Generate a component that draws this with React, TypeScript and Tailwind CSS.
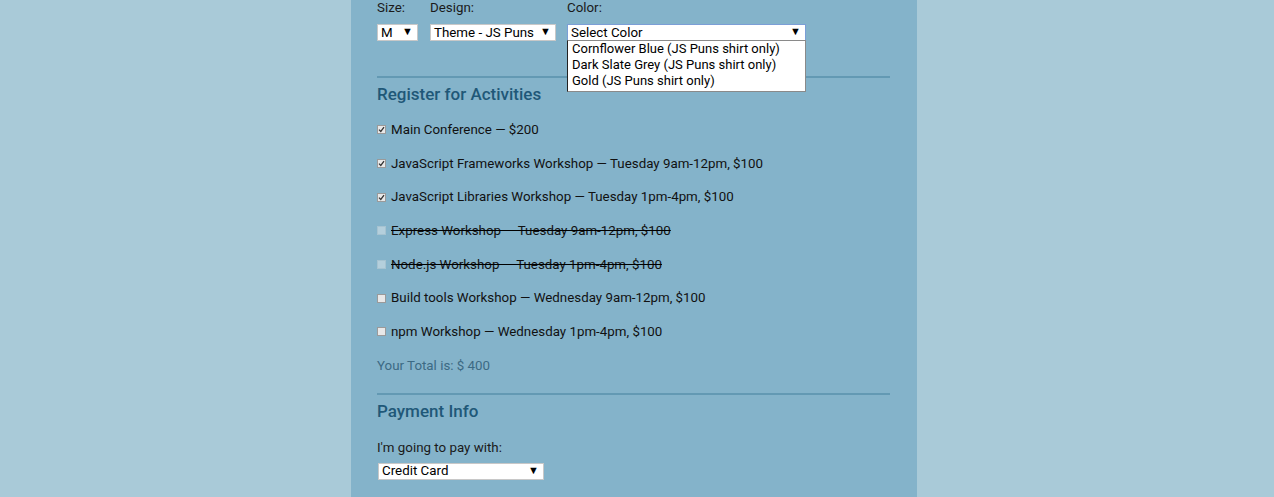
import React from 'react'

const activities = [
  { label: 'Main Conference — $200', checked: true },
  { label: 'JavaScript Frameworks Workshop — Tuesday 9am-12pm, $100', checked: true },
  { label: 'JavaScript Libraries Workshop — Tuesday 1pm-4pm, $100', checked: true },
  { label: 'Express Workshop — Tuesday 9am-12pm, $100', disabled: true },
  { label: 'Node.js Workshop — Tuesday 1pm-4pm, $100', disabled: true },
  { label: 'Build tools Workshop — Wednesday 9am-12pm, $100' },
  { label: 'npm Workshop — Wednesday 1pm-4pm, $100' },
]

function Box({ checked, disabled }: { checked?: boolean; disabled?: boolean }) {
  if (disabled) {
    return <span className="w-[9px] h-[9px] bg-[#b4cfdc] border border-[#a6c3d1] shrink-0" />
  }
  return (
    <span className="w-[9px] h-[9px] bg-[#e8e8e8] border border-[#9a9a9a] shrink-0 flex items-center justify-center">
      {checked && (
        <svg width="7" height="7" viewBox="0 0 7 7">
          <path d="M1 3.6 L2.8 5.4 L6 1.2" stroke="#333" strokeWidth="1.3" fill="none" />
        </svg>
      )}
    </span>
  )
}

function Select({ text, className }: { text: string; className: string }) {
  return (
    <div className={`h-[17px] bg-white flex items-center justify-between pl-[3px] pr-[4px] text-[13.33px] text-black ${className}`}>
      <span>{text}</span>
      <span className="text-[11px]">▼</span>
    </div>
  )
}

export default function App() {
  return (
    <div className="min-h-[497px] bg-[#a9cad8] font-['Roboto',sans-serif]">
      <div className="ml-[351px] w-[566px] min-h-[497px] bg-[#84b3ca] pl-[26px] pr-[27px] text-[13.33px] text-[#111]">
        {/* T-shirt */}
        <div className="flex">
          <div className="w-[53px]">
            <div className="h-4 leading-4 text-[#1a1a1a]">Size:</div>
            <Select text="M" className="mt-2 w-[41px] border border-[#c8c8c8]" />
          </div>
          <div className="w-[137px]">
            <div className="h-4 leading-4 text-[#1a1a1a]">Design:</div>
            <Select text="Theme - JS Puns" className="mt-2 w-[126px] border border-[#c8c8c8]" />
          </div>
          <div className="relative">
            <div className="h-4 leading-4 text-[#1a1a1a]">Color:</div>
            <Select text="Select Color" className="mt-2 w-[239px] border border-[#7b9ed6]" />
            <div className="absolute left-0 top-[40px] w-[239px] bg-white border border-[#8a8a8a] border-l-[#222] pl-[4px] pb-[2px] text-[13px] text-black">
              <div className="h-4 leading-4">Cornflower Blue (JS Puns shirt only)</div>
              <div className="h-4 leading-4">Dark Slate Grey (JS Puns shirt only)</div>
              <div className="h-4 leading-4">Gold (JS Puns shirt only)</div>
            </div>
          </div>
        </div>

        <div className="mt-[35px] h-[2px] bg-[#6399b3]" />

        <h2 className="mt-[6px] h-5 leading-5 text-[17px] font-medium text-[#1f5878]">Register for Activities</h2>

        <div className="mt-[9px]">
          {activities.map(a => (
            <div key={a.label} className="h-[33.7px] flex items-center gap-[5px]">
              <Box checked={a.checked} disabled={a.disabled} />
              <span className={a.disabled ? 'line-through decoration-black' : ''}>{a.label}</span>
            </div>
          ))}
          <div className="h-[33.7px] flex items-center text-[#3c6a84]">Your Total is: $ 400</div>
        </div>

        <div className="mt-[10px] h-[2px] bg-[#6399b3]" />

        <h2 className="mt-[6px] h-5 leading-5 text-[17px] font-medium text-[#1f5878]">Payment Info</h2>

        <div className="mt-[19px] h-4 leading-4 text-[#1a1a1a]">I'm going to pay with:</div>
        <Select text="Credit Card" className="mt-[7px] ml-px w-[166px] border border-[#c8c8c8]" />
      </div>
    </div>
  )
}
